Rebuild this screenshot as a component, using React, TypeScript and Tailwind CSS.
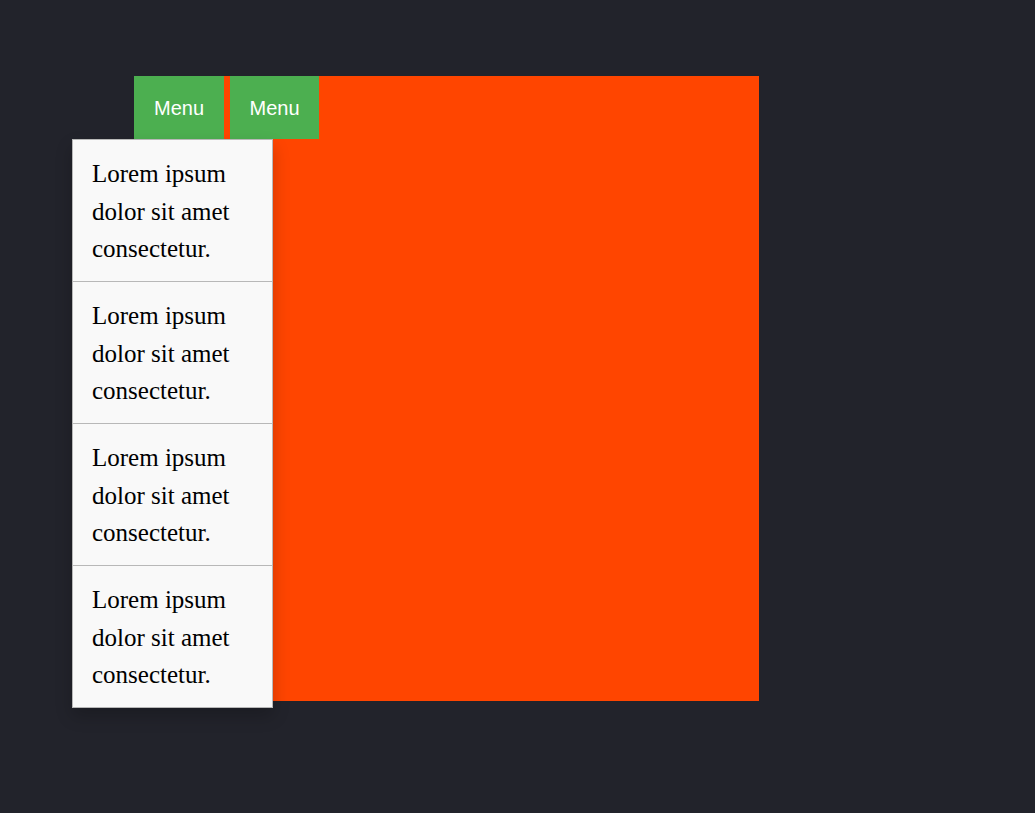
const items = [1, 2, 3, 4];

const App = () => {
  return (
    <div className="min-h-[813px] w-full bg-[#22232b] pt-[76px] pl-[134px]">
      <div className="relative w-[625px] h-[625px] bg-[#ff4500]">
        <div className="flex gap-[6px] font-['Liberation_Sans',Arial,sans-serif]">
          <div className="w-[90px] h-[63px] flex items-center justify-center bg-[#4caf50] text-white text-[20px]">
            Menu
          </div>
          <div className="w-[89px] h-[63px] flex items-center justify-center bg-[#4caf50] text-white text-[20px]">
            Menu
          </div>
        </div>
        <div className="absolute left-[-62px] top-[63px] w-[201px] bg-[#f9f9f9] border border-[#b8b8b8] shadow-[0_8px_16px_0_rgba(0,0,0,0.2)] font-['Liberation_Serif','Times_New_Roman',serif] text-[25px] leading-[37.5px] text-black">
          {items.map((i, idx) => (
            <div
              key={i}
              className={`px-[19px] pt-[15px] pb-[13.5px] ${
                idx < items.length - 1 ? "border-b border-[#b8b8b8]" : ""
              }`}
            >
              Lorem ipsum dolor sit amet consectetur.
            </div>
          ))}
        </div>
      </div>
    </div>
  );
};

export default App;
